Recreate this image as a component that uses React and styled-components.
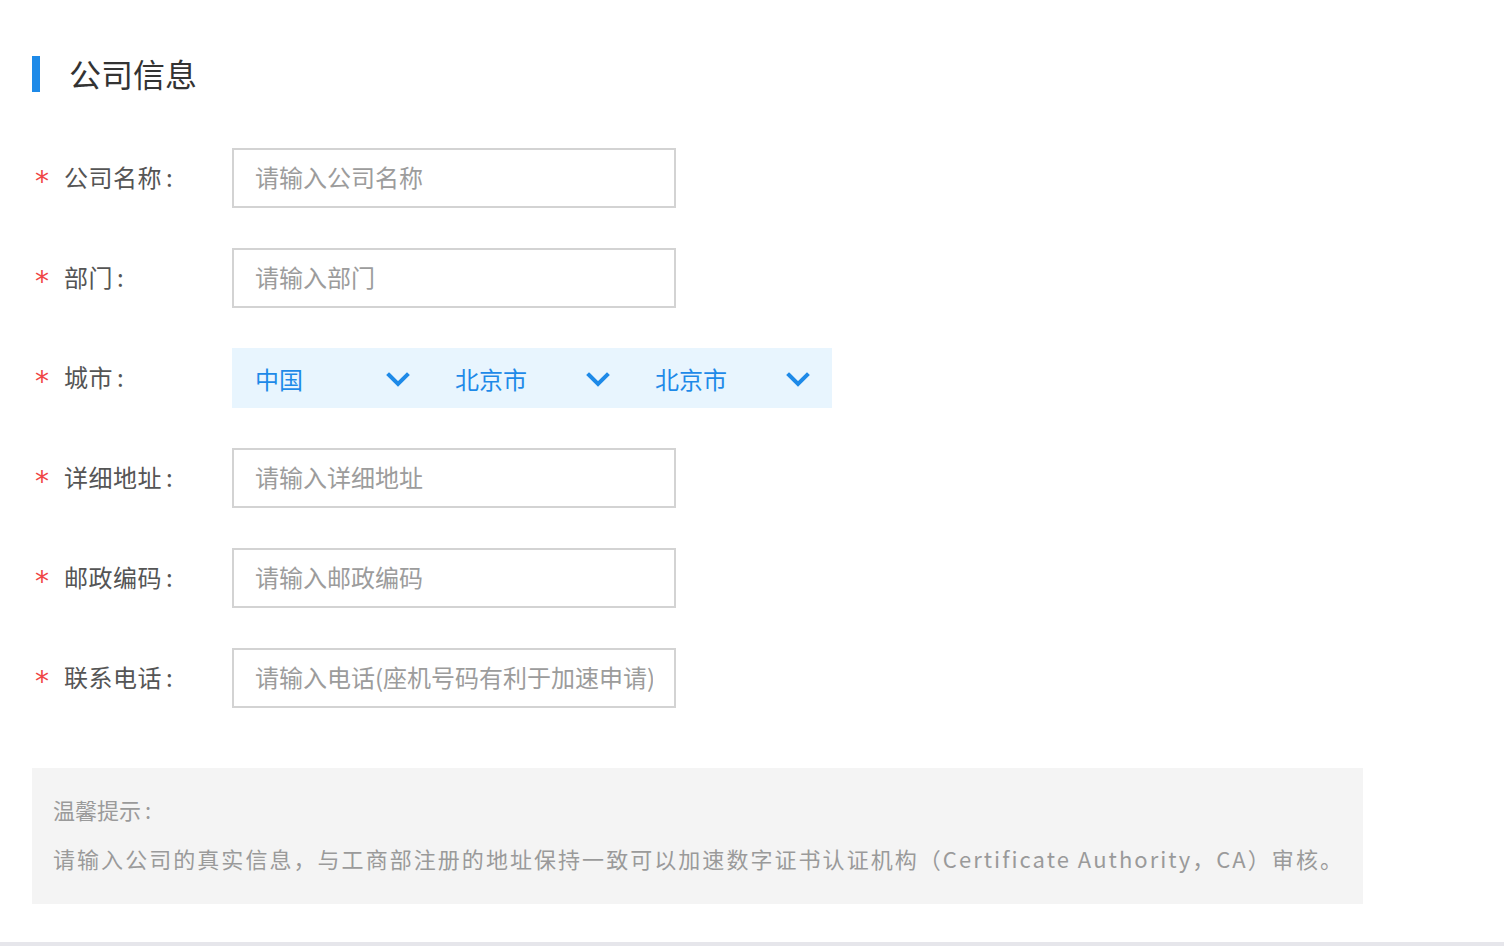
import React from "react";
import styled, { createGlobalStyle } from "styled-components";

const GlobalStyle = createGlobalStyle`
  html, body {
    margin: 0;
    padding: 0;
    background: #ffffff;
  }
  body {
    font-family: "Noto Sans CJK SC", "Noto Sans", sans-serif;
  }
  * {
    box-sizing: border-box;
  }
`;

const fields = [
  { label: "公司名称", placeholder: "请输入公司名称" },
  { label: "部门", placeholder: "请输入部门" },
  { label: "城市", select: ["中国", "北京市", "北京市"] },
  { label: "详细地址", placeholder: "请输入详细地址" },
  { label: "邮政编码", placeholder: "请输入邮政编码" },
  { label: "联系电话", placeholder: "请输入电话(座机号码有利于加速申请)" },
];

export default function App() {
  return (
    <>
      <GlobalStyle />
      <Page>
        <Title>公司信息</Title>
        <Form>
          {fields.map((f, i) => (
            <Row key={i}>
              <Label>
                <Star>*</Star>
                {f.label}
                <Colon>:</Colon>
              </Label>
              {f.select ? (
                <SelectGroup>
                  {f.select.map((v, j) => (
                    <Select key={j}>
                      <span>{v}</span>
                      <Chevron />
                    </Select>
                  ))}
                </SelectGroup>
              ) : (
                <Input placeholder={f.placeholder} />
              )}
            </Row>
          ))}
        </Form>
        <Tip>
          <TipTitle>
            温馨提示<Colon>:</Colon>
          </TipTitle>
          <TipText>
            请输入公司的真实信息，与工商部注册的地址保持一致可以加速数字证书认证机构（Certificate Authority，CA）审核。
          </TipText>
        </Tip>
      </Page>
      <Footer />
    </>
  );
}

function Chevron() {
  return (
    <svg width="24" height="16" viewBox="0 0 24 16">
      <path
        d="M3 3 L12 12 L21 3"
        fill="none"
        stroke="#1e8ae8"
        strokeWidth="4"
        strokeLinecap="square"
      />
    </svg>
  );
}

const Page = styled.div`
  padding: 56px 0 0 32px;
`;

const Title = styled.h2`
  margin: 0;
  height: 36px;
  line-height: 34px;
  border-left: 8px solid #1e8ae8;
  padding-left: 29px;
  font-size: 32px;
  font-weight: 400;
  color: #333333;
`;

const Form = styled.div`
  margin-top: 56px;
  display: flex;
  flex-direction: column;
  gap: 40px;
`;

const Row = styled.div`
  display: flex;
  align-items: center;
  height: 60px;
`;

const Label = styled.div`
  width: 200px;
  display: flex;
  align-items: center;
  padding-bottom: 4px;
  font-size: 24px;
  color: #555555;
  letter-spacing: 0.5px;
`;

const Colon = styled.span`
  margin-left: 4px;
`;

const Star = styled.span`
  width: 32px;
  padding-left: 3px;
  color: #f04545;
  font-family: "DejaVu Sans", sans-serif;
  font-size: 28px;
  line-height: 28px;
  padding-top: 11px;
`;

const Input = styled.input`
  width: 444px;
  height: 60px;
  border: 2px solid #d3d3d3;
  padding: 0 21px 4px;
  font-family: "Noto Sans CJK SC", "Noto Sans", sans-serif;
  font-size: 24px;
  color: #333;
  outline: none;
  &::placeholder {
    color: #9c9c9c;
  }
`;

const SelectGroup = styled.div`
  display: flex;
  width: 600px;
  height: 60px;
  background: #e8f5fe;
`;

const Select = styled.div`
  width: 200px;
  display: flex;
  align-items: center;
  justify-content: space-between;
  padding: 0 22px 0 23px;
  font-size: 24px;
  color: #1e8ae8;
  svg {
    margin-top: 4px;
  }
`;

const Tip = styled.div`
  margin-top: 60px;
  width: 1331px;
  height: 136px;
  background: #f4f4f4;
  padding: 26px 21px 0;
  color: #9a9a9a;
`;

const TipTitle = styled.div`
  font-size: 22px;
  line-height: 30px;
`;

const TipText = styled.div`
  margin-top: 19px;
  font-size: 22px;
  line-height: 30px;
  letter-spacing: 2.05px;
  white-space: nowrap;
`;

const Footer = styled.div`
  margin-top: 38px;
  height: 6px;
  background: #e6e6eb;
`;
